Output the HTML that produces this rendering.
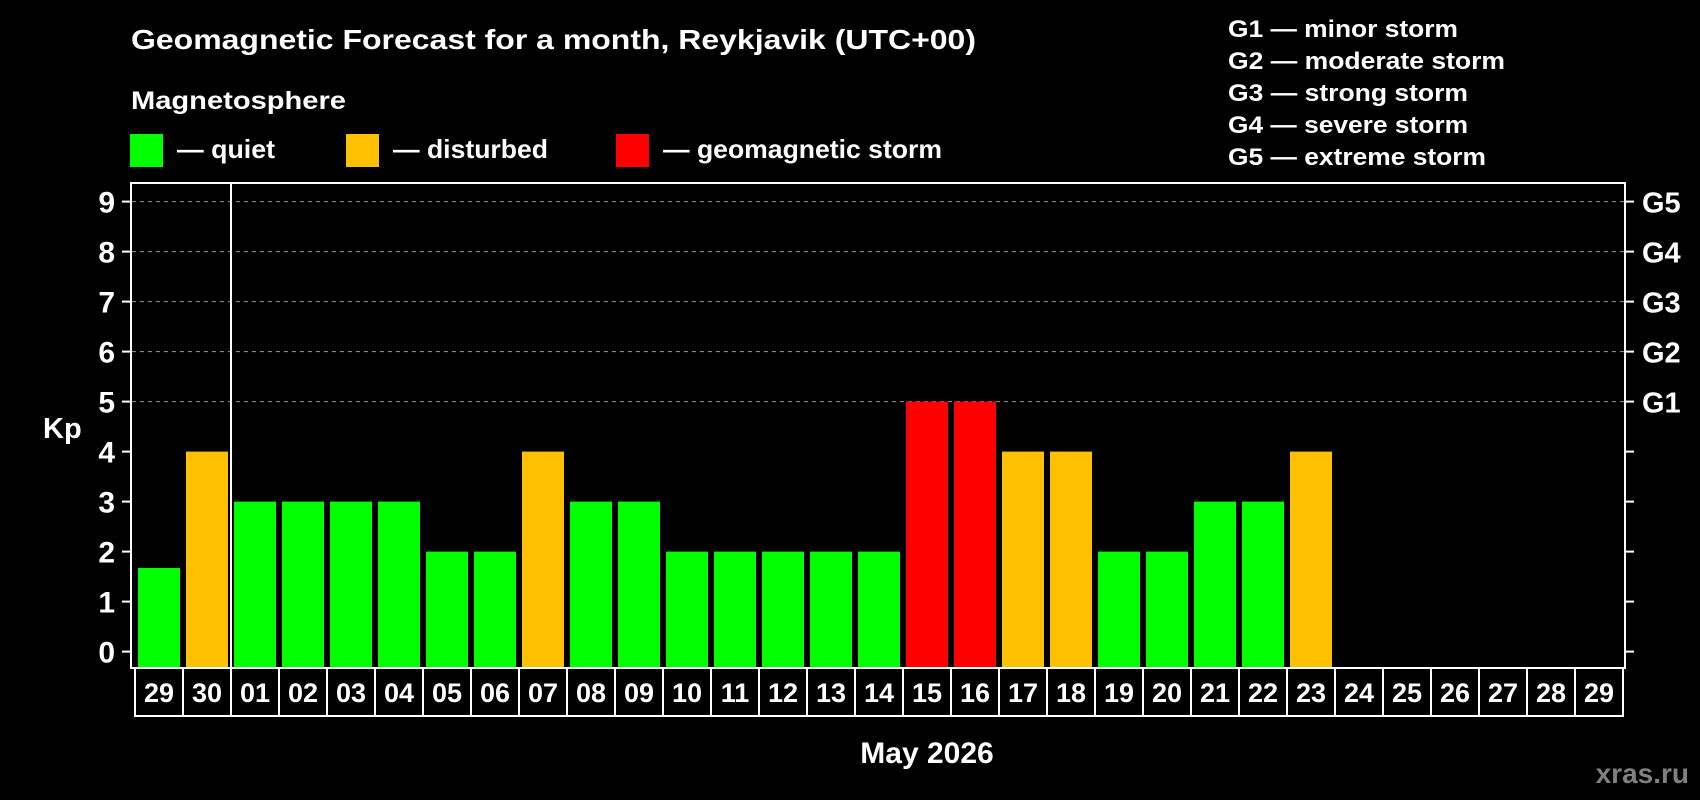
<!DOCTYPE html>
<html><head><meta charset="utf-8"><style>
html,body{margin:0;padding:0;background:#000;width:1700px;height:800px;overflow:hidden}
svg{display:block}
text{font-family:"Liberation Sans",Arial,sans-serif;font-weight:bold;fill:#fff}
</style></head><body>
<svg width="1700" height="800" viewBox="0 0 1700 800">
<rect width="1700" height="800" fill="#000"/>
<text x="131" y="49" font-size="28" textLength="845" lengthAdjust="spacingAndGlyphs">Geomagnetic Forecast for a month, Reykjavik (UTC+00)</text>
<text x="131" y="109" font-size="25" textLength="215" lengthAdjust="spacingAndGlyphs">Magnetosphere</text>
<rect x="130" y="134" width="33" height="33" fill="#00ff00"/>
<text x="177" y="158" font-size="26" textLength="98" lengthAdjust="spacingAndGlyphs">— quiet</text>
<rect x="346" y="134" width="33" height="33" fill="#ffc000"/>
<text x="393" y="158" font-size="26" textLength="155" lengthAdjust="spacingAndGlyphs">— disturbed</text>
<rect x="616" y="134" width="33" height="33" fill="#ff0000"/>
<text x="663" y="158" font-size="26" textLength="279" lengthAdjust="spacingAndGlyphs">— geomagnetic storm</text>
<g font-size="24">
<text x="1228" y="37" textLength="230" lengthAdjust="spacingAndGlyphs">G1 — minor storm</text>
<text x="1228" y="69" textLength="277" lengthAdjust="spacingAndGlyphs">G2 — moderate storm</text>
<text x="1228" y="101" textLength="240" lengthAdjust="spacingAndGlyphs">G3 — strong storm</text>
<text x="1228" y="133" textLength="240" lengthAdjust="spacingAndGlyphs">G4 — severe storm</text>
<text x="1228" y="165" textLength="258" lengthAdjust="spacingAndGlyphs">G5 — extreme storm</text>
</g>
<g stroke="#999" stroke-width="1" stroke-dasharray="4,4">
<line x1="132" y1="201.6" x2="1625" y2="201.6"/>
<line x1="132" y1="251.6" x2="1625" y2="251.6"/>
<line x1="132" y1="301.6" x2="1625" y2="301.6"/>
<line x1="132" y1="351.6" x2="1625" y2="351.6"/>
<line x1="132" y1="401.6" x2="1625" y2="401.6"/>
</g>
<g>
<rect x="138" y="568" width="42" height="100" fill="#00ff00"/>
<rect x="186" y="451.6" width="42" height="216.4" fill="#ffc000"/>
<rect x="234" y="501.6" width="42" height="166.4" fill="#00ff00"/>
<rect x="282" y="501.6" width="42" height="166.4" fill="#00ff00"/>
<rect x="330" y="501.6" width="42" height="166.4" fill="#00ff00"/>
<rect x="378" y="501.6" width="42" height="166.4" fill="#00ff00"/>
<rect x="426" y="551.6" width="42" height="116.4" fill="#00ff00"/>
<rect x="474" y="551.6" width="42" height="116.4" fill="#00ff00"/>
<rect x="522" y="451.6" width="42" height="216.4" fill="#ffc000"/>
<rect x="570" y="501.6" width="42" height="166.4" fill="#00ff00"/>
<rect x="618" y="501.6" width="42" height="166.4" fill="#00ff00"/>
<rect x="666" y="551.6" width="42" height="116.4" fill="#00ff00"/>
<rect x="714" y="551.6" width="42" height="116.4" fill="#00ff00"/>
<rect x="762" y="551.6" width="42" height="116.4" fill="#00ff00"/>
<rect x="810" y="551.6" width="42" height="116.4" fill="#00ff00"/>
<rect x="858" y="551.6" width="42" height="116.4" fill="#00ff00"/>
<rect x="906" y="401.6" width="42" height="266.4" fill="#ff0000"/>
<rect x="954" y="401.6" width="42" height="266.4" fill="#ff0000"/>
<rect x="1002" y="451.6" width="42" height="216.4" fill="#ffc000"/>
<rect x="1050" y="451.6" width="42" height="216.4" fill="#ffc000"/>
<rect x="1098" y="551.6" width="42" height="116.4" fill="#00ff00"/>
<rect x="1146" y="551.6" width="42" height="116.4" fill="#00ff00"/>
<rect x="1194" y="501.6" width="42" height="166.4" fill="#00ff00"/>
<rect x="1242" y="501.6" width="42" height="166.4" fill="#00ff00"/>
<rect x="1290" y="451.6" width="42" height="216.4" fill="#ffc000"/>
</g>
<rect x="131" y="183" width="1494" height="485" fill="none" stroke="#fff" stroke-width="2"/>
<line x1="231" y1="183" x2="231" y2="668" stroke="#fff" stroke-width="2"/>
<g stroke="#fff" stroke-width="2">
<line x1="122" y1="201.6" x2="131" y2="201.6"/><line x1="122" y1="251.6" x2="131" y2="251.6"/>
<line x1="122" y1="301.6" x2="131" y2="301.6"/><line x1="122" y1="351.6" x2="131" y2="351.6"/>
<line x1="122" y1="401.6" x2="131" y2="401.6"/><line x1="122" y1="451.6" x2="131" y2="451.6"/>
<line x1="122" y1="501.6" x2="131" y2="501.6"/><line x1="122" y1="551.6" x2="131" y2="551.6"/>
<line x1="122" y1="601.6" x2="131" y2="601.6"/><line x1="122" y1="651.6" x2="131" y2="651.6"/>
<line x1="1625" y1="201.6" x2="1634" y2="201.6"/><line x1="1625" y1="251.6" x2="1634" y2="251.6"/>
<line x1="1625" y1="301.6" x2="1634" y2="301.6"/><line x1="1625" y1="351.6" x2="1634" y2="351.6"/>
<line x1="1625" y1="401.6" x2="1634" y2="401.6"/><line x1="1625" y1="451.6" x2="1634" y2="451.6"/>
<line x1="1625" y1="501.6" x2="1634" y2="501.6"/><line x1="1625" y1="551.6" x2="1634" y2="551.6"/>
<line x1="1625" y1="601.6" x2="1634" y2="601.6"/><line x1="1625" y1="651.6" x2="1634" y2="651.6"/>
</g>
<g font-size="30" text-anchor="end">
<text x="115" y="212.6">9</text><text x="115" y="262.6">8</text><text x="115" y="312.6">7</text>
<text x="115" y="362.6">6</text><text x="115" y="412.6">5</text><text x="115" y="462.6">4</text>
<text x="115" y="512.6">3</text><text x="115" y="562.6">2</text><text x="115" y="612.6">1</text>
<text x="115" y="662.6">0</text>
</g>
<text x="43" y="438" font-size="29">Kp</text>
<g font-size="29">
<text x="1642" y="212.6">G5</text><text x="1642" y="262.6">G4</text><text x="1642" y="312.6">G3</text>
<text x="1642" y="362.6">G2</text><text x="1642" y="412.6">G1</text>
</g>
<g fill="none" stroke="#fff" stroke-width="2">
<rect x="135" y="668" width="1488" height="48"/>
<path d="M183 668V716M231 668V716M279 668V716M327 668V716M375 668V716M423 668V716M471 668V716M519 668V716M567 668V716M615 668V716M663 668V716M711 668V716M759 668V716M807 668V716M855 668V716M903 668V716M951 668V716M999 668V716M1047 668V716M1095 668V716M1143 668V716M1191 668V716M1239 668V716M1287 668V716M1335 668V716M1383 668V716M1431 668V716M1479 668V716M1527 668V716M1575 668V716"/>
</g>
<g font-size="27" text-anchor="middle">
<text x="159" y="702">29</text><text x="207" y="702">30</text><text x="255" y="702">01</text><text x="303" y="702">02</text>
<text x="351" y="702">03</text><text x="399" y="702">04</text><text x="447" y="702">05</text><text x="495" y="702">06</text>
<text x="543" y="702">07</text><text x="591" y="702">08</text><text x="639" y="702">09</text><text x="687" y="702">10</text>
<text x="735" y="702">11</text><text x="783" y="702">12</text><text x="831" y="702">13</text><text x="879" y="702">14</text>
<text x="927" y="702">15</text><text x="975" y="702">16</text><text x="1023" y="702">17</text><text x="1071" y="702">18</text>
<text x="1119" y="702">19</text><text x="1167" y="702">20</text><text x="1215" y="702">21</text><text x="1263" y="702">22</text>
<text x="1311" y="702">23</text><text x="1359" y="702">24</text><text x="1407" y="702">25</text><text x="1455" y="702">26</text>
<text x="1503" y="702">27</text><text x="1551" y="702">28</text><text x="1599" y="702">29</text>
</g>
<text x="927" y="763" font-size="30" text-anchor="middle">May 2026</text>
<text x="1689" y="783" font-size="28" text-anchor="end" style="fill:#808080">xras.ru</text>
</svg>
</body></html>
